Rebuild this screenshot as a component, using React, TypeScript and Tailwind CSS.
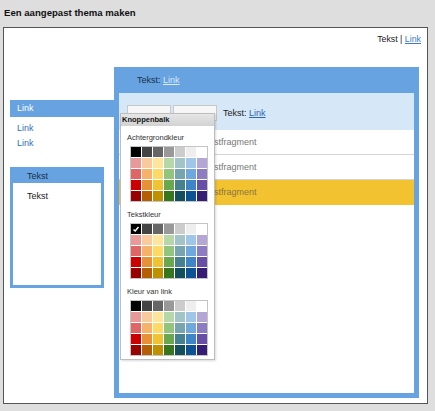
import React from "react";

const palette: string[][] = [
  ["#000000", "#444444", "#666666", "#999999", "#cccccc", "#eeeeee", "#ffffff"],
  ["#ea9999", "#f9cb9c", "#ffe599", "#b6d7a8", "#a2c4c9", "#9fc5e8", "#b4a7d6"],
  ["#e06666", "#f6b26b", "#ffd966", "#93c47d", "#76a5af", "#6fa8dc", "#8e7cc3"],
  ["#cc0000", "#e69138", "#f1c232", "#6aa84f", "#45818e", "#3d85c6", "#674ea7"],
  ["#990000", "#b45f06", "#bf9000", "#38761d", "#134f5c", "#0b5394", "#351c75"],
];

function Palette({ checked }: { checked?: boolean }) {
  return (
    <div className="ml-[3px] grid w-fit grid-cols-7 gap-px border border-[#c4c4c4] bg-white">
      {palette.flat().map((c, i) => (
        <div
          key={i}
          className="flex h-[10px] w-[10px] items-center justify-center"
          style={{ backgroundColor: c }}
        >
          {checked && i === 0 ? (
            <svg width="8" height="8" viewBox="0 0 8 8">
              <path d="M1.5 4.5 L3.2 6 L6.5 2" stroke="#fff" strokeWidth="1.4" fill="none" />
            </svg>
          ) : null}
        </div>
      ))}
    </div>
  );
}

function Section({ label, checked, last }: { label: string; checked?: boolean; last?: boolean }) {
  return (
    <div className={last ? "" : "mb-[5px]"}>
      <div className="h-[16px] text-[7.5px] leading-[16px] text-[#333]">{label}</div>
      <Palette checked={checked} />
    </div>
  );
}

export default function App() {
  return (
    <div
      className="h-[411px] w-[435px] overflow-hidden bg-[#dedede]"
      style={{ fontFamily: '"Liberation Sans", Arial, sans-serif' }}
    >
      <div className="h-[27px] pl-[4px] pt-[7px] text-[9.6px] font-bold leading-[12px] text-[#111]">
        Een aangepast thema maken
      </div>
      <div className="ml-[3px] h-[377px] w-[425px] border border-[#555] bg-white">
        <div className="flex h-[39px] justify-end pr-[6px] pt-[5px] text-[8.8px] leading-[12px] text-[#222]">
          <span>
            Tekst | <span className="text-[#3d7cc9] underline">Link</span>
          </span>
        </div>
        <div className="flex">
          <div className="ml-[6px] w-[104px] pt-[33px]">
            <div className="h-[17px] bg-[#67a3e0] pl-[7px] text-[9px] leading-[17px] text-white">Link</div>
            <div className="pl-[7px] pt-[4px] text-[9px] leading-[15px] text-[#2f6fc4]">
              <div>Link</div>
              <div>Link</div>
            </div>
            <div className="mt-[16px] h-[121px] w-[94px] border-[3px] border-[#67a3e0] bg-white">
              <div className="h-[13px] bg-[#67a3e0] pl-[14px] text-[9px] leading-[13px] text-[#1b2f4a]">Tekst</div>
              <div className="pl-[14px] pt-[7px] text-[9px] leading-[12px] text-[#222]">Tekst</div>
            </div>
          </div>
          <div className="relative h-[331px] w-[305px] border-[5px] border-[#67a3e0] bg-white">
            <div className="h-[21px] bg-[#67a3e0] pl-[18px] text-[9px] leading-[16px] text-[#1b2f4a]">
              Tekst: <span className="text-[#dbe9f8] underline">Link</span>
            </div>
            <div className="flex h-[37px] items-start bg-[#d6e7f8] pl-[8px] pt-[12px]">
              <div className="h-[16px] w-[44px] border border-[#c8c8c8] bg-[#f6f6f6]" />
              <div className="ml-[2px] h-[16px] w-[44px] border border-[#c8c8c8] bg-[#f6f6f6]" />
              <div className="ml-[6px] text-[9px] leading-[16px] text-[#222]">
                Tekst: <span className="text-[#2a66b8] underline">Link</span>
              </div>
            </div>
            <div className="h-[25px] border-b border-[#d4d4d4] pl-[81px] text-[9px] leading-[25px] text-[#777]">
              Tekstfragment
            </div>
            <div className="h-[25px] border-b border-[#d4d4d4] pl-[81px] text-[9px] leading-[24px] text-[#777]">
              Tekstfragment
            </div>
            <div className="h-[25px] bg-[#f2c230] pl-[81px] text-[9px] leading-[24px] text-[#8a7540]">
              Tekstfragment
            </div>

            <div className="absolute left-[1px] top-[41px] h-[247px] w-[95px] border border-[#bdbdbd] bg-white shadow-[1px_1px_2px_rgba(0,0,0,0.15)]">
              <div className="h-[12px] bg-gradient-to-b from-[#e6e6e6] to-[#d2d2d2] pl-[1px] text-[7.5px] font-bold leading-[12px] text-[#111]">
                Knoppenbalk
              </div>
              <div className="pl-[6px] pt-[4px]">
                <Section label="Achtergrondkleur" />
                <Section label="Tekstkleur" checked />
                <Section label="Kleur van link" last />
              </div>
            </div>
          </div>
        </div>
      </div>
    </div>
  );
}
